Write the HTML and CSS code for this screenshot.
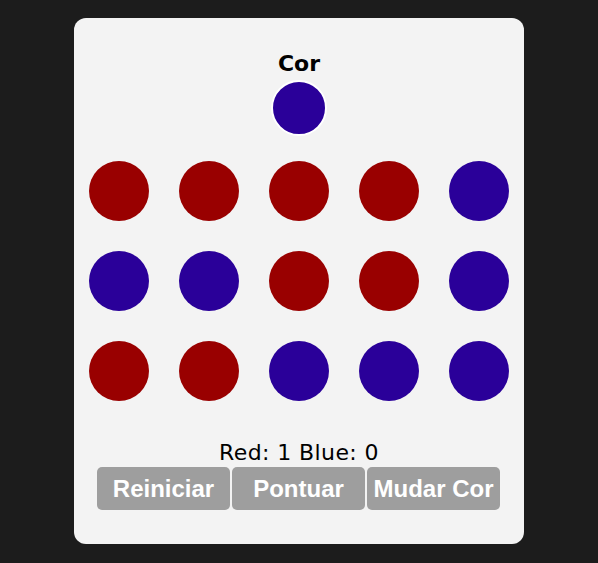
FILE: index.html
```html
<!DOCTYPE html>
<html lang="pt">
<head>
    <meta charset="UTF-8">
    <meta name="viewport" content="width=device-width, initial-scale=1.0">
    <title>Cor</title>
    <link rel="stylesheet" href="styles.css">
</head>
<body>
    <main class="card">
        <h1 class="title">Cor</h1>
        <div class="current blue"></div>
        <div class="board">
            <div class="dot red"></div>
            <div class="dot red"></div>
            <div class="dot red"></div>
            <div class="dot red"></div>
            <div class="dot blue"></div>
            <div class="dot blue"></div>
            <div class="dot blue"></div>
            <div class="dot red"></div>
            <div class="dot red"></div>
            <div class="dot blue"></div>
            <div class="dot red"></div>
            <div class="dot red"></div>
            <div class="dot blue"></div>
            <div class="dot blue"></div>
            <div class="dot blue"></div>
        </div>
        <p class="score">Red: 1 Blue: 0</p>
        <div class="actions">
            <button class="btn">Reiniciar</button>
            <button class="btn">Pontuar</button>
            <button class="btn">Mudar Cor</button>
        </div>
    </main>
</body>
</html>
```

FILE: styles.css
```css
:root {
    --bg: #1c1c1c;
    --card: #f3f3f3;
    --red: #990000;
    --blue: #2a0099;
    --grey: #9e9e9e;
}

body {
    margin: 0;
    background-color: var(--bg);
    font-family: "DejaVu Sans", sans-serif;
}

.card {
    width: 450px;
    box-sizing: border-box;
    margin: 18px auto 0;
    padding: 32px 15px 34px;
    background-color: var(--card);
    border-radius: 12px;
    display: flex;
    flex-direction: column;
    align-items: center;
}

.title {
    margin: 0;
    font-size: 22px;
    line-height: 27px;
    font-weight: bold;
    color: #000;
}

.current {
    width: 52px;
    height: 52px;
    border: 2px solid #fff;
    border-radius: 50%;
    margin-top: 3px;
}

.board {
    display: grid;
    grid-template-columns: repeat(5, 60px);
    gap: 30px;
    margin-top: 25px;
}

.dot {
    width: 60px;
    height: 60px;
    border-radius: 50%;
}

.red {
    background-color: var(--red);
}

.blue {
    background-color: var(--blue);
}

.score {
    margin: 39px 0 0;
    font-size: 22px;
    line-height: 26px;
    letter-spacing: 0.4px;
    color: #000;
}

.actions {
    display: flex;
    gap: 2px;
    margin-top: 1px;
    margin-right: 1px;
}

.btn {
    width: 133px;
    height: 43px;
    padding: 0;
    border: none;
    border-radius: 5px;
    background-color: var(--grey);
    color: #fff;
    font-family: "Liberation Sans", Arial, sans-serif;
    font-size: 24px;
    font-weight: bold;
}
```
